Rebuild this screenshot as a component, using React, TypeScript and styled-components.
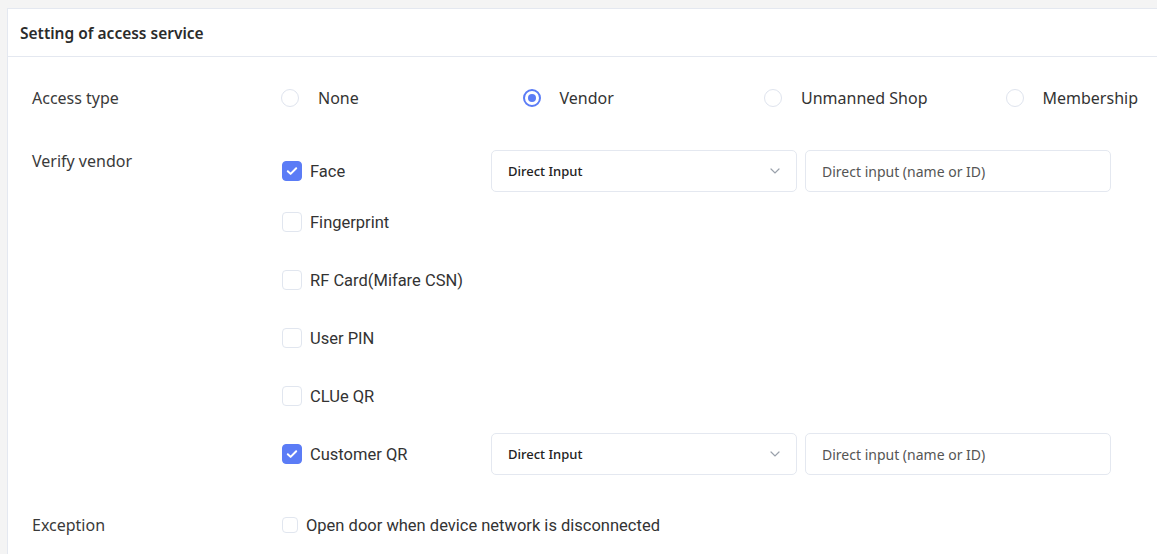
import React from "react";
import styled, { createGlobalStyle } from "styled-components";

const GlobalStyle = createGlobalStyle`
  html, body {
    margin: 0;
    padding: 0;
    background: #f4f4f4;
    overflow: hidden;
  }
  * { box-sizing: border-box; }
`;

type CheckRow = { label: string; checked: boolean; withInput?: boolean };

const vendorChecks: CheckRow[] = [
  { label: "Face", checked: true, withInput: true },
  { label: "Fingerprint", checked: false },
  { label: "RF Card(Mifare CSN)", checked: false },
  { label: "User PIN", checked: false },
  { label: "CLUe QR", checked: false },
  { label: "Customer QR", checked: true, withInput: true },
];

const accessTypes = ["None", "Vendor", "Unmanned Shop", "Membership"];

const CheckIcon = () => (
  <svg width="12" height="10" viewBox="0 0 12 10" fill="none">
    <path
      d="M1.8 5.2 L4.6 7.9 L10.2 2.2"
      stroke="#fff"
      strokeWidth="2"
      strokeLinecap="round"
      strokeLinejoin="round"
    />
  </svg>
);

const Chevron = () => (
  <svg width="10" height="6" viewBox="0 0 10 6" fill="none">
    <path d="M1 1 L5 5 L9 1" stroke="#9aa1ab" strokeWidth="1.2" strokeLinecap="round" />
  </svg>
);

export default function App() {
  return (
    <Page>
      <GlobalStyle />
      <Card>
        <Header>Setting of access service</Header>
        <Body>
          <Field $mb={32}>
            <Label>Access type</Label>
            <RadioGroup>
              {accessTypes.map((t) => (
                <RadioItem key={t}>
                  <Radio $checked={t === "Vendor"} />
                  <RadioText>{t}</RadioText>
                </RadioItem>
              ))}
            </RadioGroup>
          </Field>

          <Field $mb={30} $top>
            <Label>Verify vendor</Label>
            <CheckList>
              {vendorChecks.map((c, i) => (
                <CheckLine key={c.label} $first={i === 0}>
                  <CheckItem>
                    <Box $checked={c.checked}>{c.checked && <CheckIcon />}</Box>
                    <CheckText>{c.label}</CheckText>
                  </CheckItem>
                  {c.withInput && (
                    <>
                      <Select>
                        <span>Direct Input</span>
                        <Chevron />
                      </Select>
                      <TextInput placeholder="Direct input (name or ID)" />
                    </>
                  )}
                </CheckLine>
              ))}
            </CheckList>
          </Field>

          <Field $mb={0}>
            <Label>Exception</Label>
            <CheckItem>
              <Box $small />
              <CheckText $gap={8}>Open door when device network is disconnected</CheckText>
            </CheckItem>
          </Field>
        </Body>
      </Card>
    </Page>
  );
}

const Page = styled.div`
  padding: 8px 0 0 7px;
  width: 1157px;
  height: 554px;
  overflow: hidden;
`;

const Card = styled.div`
  width: 1270px;
  min-height: 560px;
  background: #fff;
  border: 1px solid #e4e8f0;
  border-right: none;
  border-bottom: none;
`;

const Header = styled.div`
  height: 48px;
  display: flex;
  align-items: center;
  padding-left: 12px;
  border-bottom: 1px solid #e4e8f0;
  font-family: "Noto Sans", sans-serif;
  font-size: 15.5px;
  font-weight: 600;
  color: #2b2b2b;
`;

const Body = styled.div`
  padding: 21px 24px 0 24px;
`;

const Field = styled.div<{ $mb: number; $top?: boolean }>`
  display: grid;
  grid-template-columns: 249px 1fr;
  align-items: ${(p) => (p.$top ? "start" : "center")};
  min-height: 40px;
  margin-bottom: ${(p) => p.$mb}px;
`;

const Label = styled.div`
  font-family: "Noto Sans", sans-serif;
  font-size: 16px;
  line-height: 22px;
  color: #3a3a3a;
`;

const RadioGroup = styled.div`
  display: grid;
  grid-template-columns: repeat(4, 241.5px);
`;

const RadioItem = styled.label`
  display: flex;
  align-items: center;
  height: 40px;
`;

const Radio = styled.span<{ $checked?: boolean }>`
  width: 18px;
  height: 18px;
  border-radius: 50%;
  border: ${(p) => (p.$checked ? "2px solid #5b7cf6" : "1.5px solid #dfe4ee")};
  display: flex;
  align-items: center;
  justify-content: center;
  &::after {
    content: "";
    display: ${(p) => (p.$checked ? "block" : "none")};
    width: 8px;
    height: 8px;
    border-radius: 50%;
    background: #5b7cf6;
  }
`;

const RadioText = styled.span`
  margin-left: 19px;
  font-family: "Noto Sans", sans-serif;
  font-size: 16px;
  color: #333;
`;

const CheckList = styled.div`
  display: flex;
  flex-direction: column;
  gap: 16px;
`;

const CheckLine = styled.div<{ $first?: boolean }>`
  display: grid;
  grid-template-columns: 202px 306px 306px;
  column-gap: 8px;
  align-items: center;
  height: 42px;
  margin-bottom: ${(p) => (p.$first ? "-7px" : "0")};
`;

const CheckItem = styled.label`
  display: flex;
  align-items: center;
  padding-left: 1px;
`;

const Box = styled.span<{ $checked?: boolean; $small?: boolean }>`
  width: ${(p) => (p.$small ? 16 : 20)}px;
  height: ${(p) => (p.$small ? 16 : 20)}px;
  border-radius: 4px;
  background: ${(p) => (p.$checked ? "#5b7cf6" : "#fff")};
  border: 1.5px solid ${(p) => (p.$checked ? "#5b7cf6" : "#e1e6ef")};
  display: flex;
  align-items: center;
  justify-content: center;
  flex-shrink: 0;
`;

const CheckText = styled.span<{ $gap?: number }>`
  margin-left: ${(p) => p.$gap ?? 8}px;
  font-family: Roboto, sans-serif;
  font-size: 16.5px;
  color: #333;
`;

const Select = styled.div`
  height: 42px;
  border: 1px solid #e4e8f0;
  border-radius: 5px;
  display: flex;
  align-items: center;
  justify-content: space-between;
  padding: 0 16px 0 16px;
  font-family: "Noto Sans", sans-serif;
  font-size: 13px;
  font-weight: 500;
  color: #222;
`;

const TextInput = styled.input`
  height: 42px;
  width: 306px;
  border: 1px solid #e4e8f0;
  border-radius: 5px;
  padding: 0 16px;
  font-family: "Noto Sans", sans-serif;
  font-size: 14px;
  outline: none;
  &::placeholder {
    color: #555;
  }
`;
